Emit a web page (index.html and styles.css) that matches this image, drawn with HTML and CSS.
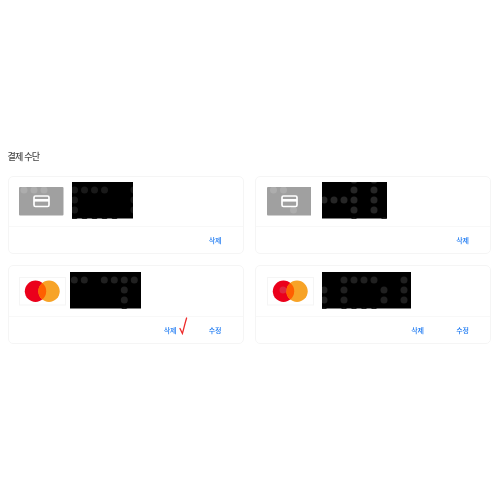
FILE: index.html
```html
<!DOCTYPE html>
<html lang="ko">
<head>
<meta charset="utf-8">
<title>결제 수단</title>
<link rel="stylesheet" href="styles.css">
</head>
<body>
<main class="page">
  <h2 class="title">결제 수단</h2>
  <div class="grid">

    <article class="card">
      <div class="body">
        <svg class="brand brand-generic" viewBox="0 0 44.5 28.5">
          <rect width="44.5" height="28.5" rx="1" fill="#a0a0a0"/>
          <circle cx="5" cy="3" r="3.5" fill="#adadad"/><circle cx="15" cy="3" r="3.5" fill="#adadad"/><circle cx="25" cy="3" r="3.5" fill="#adadad"/>
          <rect x="15" y="9" width="15" height="10.5" rx="1.4" fill="none" stroke="#fff" stroke-width="1.7"/>
          <rect x="15" y="12" width="15" height="2.6" fill="#fff"/>
        </svg>
        <svg class="mask mask-a gap-8" viewBox="0 0 61 36.5">
          <rect width="61" height="36.5" fill="#000"/>
          <g fill="#191919">
            <circle cx="2.5" cy="8" r="3.5"/><circle cx="12.5" cy="8" r="3.5"/><circle cx="22.5" cy="8" r="3.5"/><circle cx="32.5" cy="8" r="3.5"/>
            <circle cx="2.5" cy="18" r="3.5"/><circle cx="2.5" cy="28" r="3.5"/>
            <circle cx="62" cy="8" r="3.5"/><circle cx="62" cy="18" r="3.5"/><circle cx="62" cy="28" r="3.5"/>
            <circle cx="2.5" cy="39" r="3.5"/><circle cx="12.5" cy="39" r="3.5"/><circle cx="22.5" cy="39" r="3.5"/><circle cx="32.5" cy="39" r="3.5"/><circle cx="42.5" cy="39" r="3.5"/>
          </g>
        </svg>
      </div>
      <div class="foot"><button class="action">삭제</button></div>
    </article>

    <article class="card">
      <div class="body">
        <svg class="brand brand-generic" viewBox="0 0 44.5 28.5">
          <rect width="44.5" height="28.5" rx="1" fill="#a0a0a0"/>
          <circle cx="6.5" cy="3" r="3.5" fill="#adadad"/><circle cx="16.5" cy="3" r="3.5" fill="#adadad"/><circle cx="26.5" cy="23" r="3.5" fill="#adadad"/>
          <rect x="15" y="9" width="15" height="10.5" rx="1.4" fill="none" stroke="#fff" stroke-width="1.7"/>
          <rect x="15" y="12" width="15" height="2.6" fill="#fff"/>
        </svg>
        <svg class="mask mask-b gap-11" viewBox="0 0 65 36.5">
          <rect width="65" height="36.5" fill="#000"/>
          <g fill="#262626">
            <circle cx="2" cy="18" r="3.5"/><circle cx="12" cy="18" r="3.5"/><circle cx="22" cy="18" r="3.5"/>
            <circle cx="32" cy="-2" r="3.5"/><circle cx="32" cy="8" r="3.5"/><circle cx="32" cy="18" r="3.5"/><circle cx="32" cy="28" r="3.5"/><circle cx="32" cy="39" r="3.5"/>
            <circle cx="52" cy="-2" r="3.5"/><circle cx="52" cy="8" r="3.5"/><circle cx="52" cy="18" r="3.5"/><circle cx="52" cy="28" r="3.5"/><circle cx="62" cy="39" r="3.5"/>
          </g>
        </svg>
      </div>
      <div class="foot"><button class="action">삭제</button></div>
    </article>

    <article class="card">
      <div class="body body-tall">
        <svg class="brand brand-mc" viewBox="0 0 47 28.5">
          <rect x=".5" y=".5" width="46" height="27.5" fill="#fff" stroke="#f5f5f5"/>
          <circle cx="16.5" cy="14.2" r="10.7" fill="#eb001b"/>
          <circle cx="30" cy="14.2" r="10.7" fill="#f79e1b" opacity=".95"/>
          <path d="M23.25 5.9a10.7 10.7 0 0 1 0 16.6a10.7 10.7 0 0 1 0-16.6z" fill="#ff5f00"/>
        </svg>
        <svg class="mask mask-c gap-4" viewBox="0 0 71 36.5">
          <rect width="71" height="36.5" fill="#000"/>
          <g fill="#202020">
            <circle cx="4.3" cy="8" r="3.5"/><circle cx="14.3" cy="8" r="3.5"/><circle cx="34.3" cy="8" r="3.5"/><circle cx="44.3" cy="8" r="3.5"/><circle cx="54.3" cy="8" r="3.5"/><circle cx="64.3" cy="8" r="3.5"/>
            <circle cx="54.3" cy="18" r="3.5"/><circle cx="54.3" cy="28" r="3.5"/><circle cx="54.3" cy="39" r="3.5"/>
          </g>
        </svg>
      </div>
      <div class="foot">
        <button class="action">삭제</button>
        <button class="action">수정</button>
        <svg class="check" viewBox="0 0 10 18"><path d="M1 11.5C1.8 13 2.6 15 3.4 16.5C4.8 12 6 6 7.6 1" fill="none" stroke="#ee2a2a" stroke-width="1.3" stroke-linecap="round"/></svg>
      </div>
    </article>

    <article class="card">
      <div class="body body-tall">
        <svg class="brand brand-mc" viewBox="0 0 47 28.5">
          <rect x=".5" y=".5" width="46" height="27.5" fill="#fff" stroke="#f5f5f5"/>
          <circle cx="16.5" cy="14.2" r="10.7" fill="#eb001b"/>
          <circle cx="30" cy="14.2" r="10.7" fill="#f79e1b" opacity=".95"/>
          <path d="M23.25 5.9a10.7 10.7 0 0 1 0 16.6a10.7 10.7 0 0 1 0-16.6z" fill="#ff5f00"/>
          <circle cx="16" cy="13" r="3.5" fill="#d9405a" opacity=".6"/>
        </svg>
        <svg class="mask mask-d gap-8" viewBox="0 0 89 36.5">
          <rect width="89" height="36.5" fill="#000"/>
          <g fill="#202020">
            <circle cx="22" cy="8" r="3.5"/><circle cx="32" cy="8" r="3.5"/><circle cx="42" cy="8" r="3.5"/><circle cx="52" cy="8" r="3.5"/><circle cx="82" cy="8" r="3.5"/>
            <circle cx="2" cy="18" r="3.5"/><circle cx="22" cy="18" r="3.5"/><circle cx="62" cy="18" r="3.5"/><circle cx="82" cy="18" r="3.5"/>
            <circle cx="2" cy="28" r="3.5"/><circle cx="22" cy="28" r="3.5"/><circle cx="62" cy="28" r="3.5"/><circle cx="82" cy="28" r="3.5"/>
            <circle cx="2" cy="39" r="3.5"/><circle cx="22" cy="39" r="3.5"/><circle cx="32" cy="39" r="3.5"/><circle cx="42" cy="39" r="3.5"/><circle cx="52" cy="39" r="3.5"/>
          </g>
        </svg>
      </div>
      <div class="foot">
        <button class="action">삭제</button>
        <button class="action">수정</button>
      </div>
    </article>

  </div>
</main>
</body>
</html>
```
FILE: styles.css
```css
* { box-sizing: border-box; }
html, body { margin: 0; background: #fff; }
body { font-family: "Noto Sans CJK KR", "Noto Sans", sans-serif; }

.page {
  width: 500px;
  padding: 150px 0 0 7.5px;
  filter: blur(0.45px);
}
.title {
  margin: 0 0 12px;
  height: 14px;
  line-height: 14px;
  font-size: 9px;
  font-weight: 500;
  letter-spacing: -0.8px;
  color: #484848;
}
.grid {
  display: grid;
  grid-template-columns: 236px 236px;
  column-gap: 11.5px;
  row-gap: 11.5px;
}
.card {
  border: 1px solid #f5f5f5;
  border-radius: 5px;
  background: #fff;
}
.body {
  display: flex;
  align-items: center;
  height: 49.5px;
  padding: 5px 0 7px 10.5px;
  border-bottom: 1px solid #f8f8f8;
}
.body-tall { height: 50.5px; padding-top: 6px; }

.brand { display: block; flex: none; height: 28.5px; margin-top: 2px; }
.brand-generic { width: 44.5px; }
.brand-mc { width: 47px; }

.mask { display: block; flex: none; height: 36.5px; }
.mask-a { width: 61px; }
.mask-b { width: 65px; }
.mask-c { width: 71px; }
.mask-d { width: 89px; }
.gap-4 { margin-left: 4px; }
.gap-8 { margin-left: 8px; }
.gap-11 { margin-left: 10.5px; }

.foot {
  position: relative;
  display: flex;
  justify-content: flex-end;
  align-items: center;
  height: 26px;
  padding-right: 5px;
}
.action {
  width: 45px;
  padding: 0;
  border: 0;
  background: none;
  font: 500 7px/12px "Noto Sans CJK KR", "Noto Sans", sans-serif;
  letter-spacing: -0.2px;
  color: #1877f2;
  text-align: center;
}
.check {
  position: absolute;
  left: 170px;
  top: 0;
  width: 10px;
  height: 18px;
}
```
